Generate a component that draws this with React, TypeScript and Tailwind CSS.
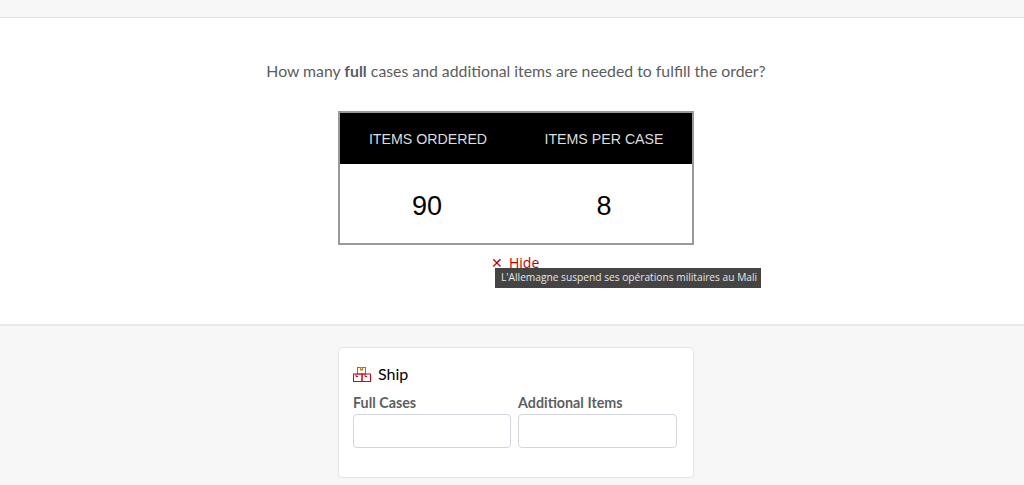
import React from 'react';

const ShipIcon = () => (
  <svg width="18" height="15" viewBox="0 0 18 15" fill="none" className="shrink-0">
    <rect x="4.5" y="0.5" width="8" height="6.5" stroke="#d9434f" />
    <rect x="7.5" y="0.5" width="2" height="2.5" stroke="#e0701a" />
    <rect x="0.5" y="7" width="8.5" height="7.5" stroke="#d0021b" />
    <rect x="9" y="7" width="8.5" height="7.5" stroke="#d0021b" />
    <path d="M3 7v2.5h2M12 7v2.5h2" stroke="#d0021b" />
  </svg>
);

export default function App() {
  return (
    <div className="h-[485px] overflow-hidden bg-[#f7f7f7] font-['Lato',sans-serif]">
      <div className="h-[18px] border-b border-[#e2e2e2]" />

      {/* Question */}
      <section className="h-[308px] border-b-2 border-[#e9e9e9] bg-white pl-2 pt-[42px]">
        <p className="text-center text-[15.8px] leading-[22px] text-[#5c5c5c]">
          How many <span className="font-bold">full</span> cases and additional items are needed to fulfill the order?
        </p>
        <div className="mx-auto mt-[29px] w-[356px] border-2 border-[#999999] font-['Liberation_Sans',sans-serif]">
          <div className="grid h-[51px] grid-cols-2 items-center bg-black pt-[2px] text-center text-[14.2px] text-[#dddddd]">
            <span>ITEMS ORDERED</span>
            <span>ITEMS PER CASE</span>
          </div>
          <div className="grid h-[79px] grid-cols-2 items-center bg-white pt-[6px] text-center text-[27px] text-black">
            <span className="pr-[2px]">90</span>
            <span>8</span>
          </div>
        </div>
        <div className="relative mx-auto mt-[8px] w-[356px]">
          <div className="ml-[153px] flex items-center gap-[6px] font-['Open_Sans',sans-serif] text-sm leading-5 text-[#c00000]">
            <span>✕</span>
            <span>Hide</span>
          </div>
          <div className="absolute left-[157px] top-[15px] flex h-5 w-[266px] items-center whitespace-nowrap bg-[#444444] pl-[6px] font-['Open_Sans',sans-serif] text-[10.2px] text-[#e6e6e6]">
            L'Allemagne suspend ses opérations militaires au Mali
          </div>
        </div>
      </section>

      {/* Ship card */}
      <div className="pl-2 pt-[21px]">
        <div className="mx-auto h-[131px] w-[356px] rounded border border-[#e4e4e4] bg-white px-[14px] pt-[14px]">
          <div className="flex items-center gap-[7px] text-base leading-6 text-black">
            <ShipIcon />
            <span>Ship</span>
          </div>
          <div className="mt-[7px] flex gap-[7px]">
            <label className="block w-[158px] text-[14.3px] font-bold leading-[20px] text-[#5f5f5f]">
              Full Cases
              <input className="mt-[1px] block h-[34px] w-full rounded border border-[#d3d6dd] bg-white" />
            </label>
            <label className="block w-[159px] text-[14.3px] font-bold leading-[20px] text-[#5f5f5f]">
              Additional Items
              <input className="mt-[1px] block h-[34px] w-full rounded border border-[#d3d6dd] bg-white" />
            </label>
          </div>
        </div>
      </div>
    </div>
  );
}
